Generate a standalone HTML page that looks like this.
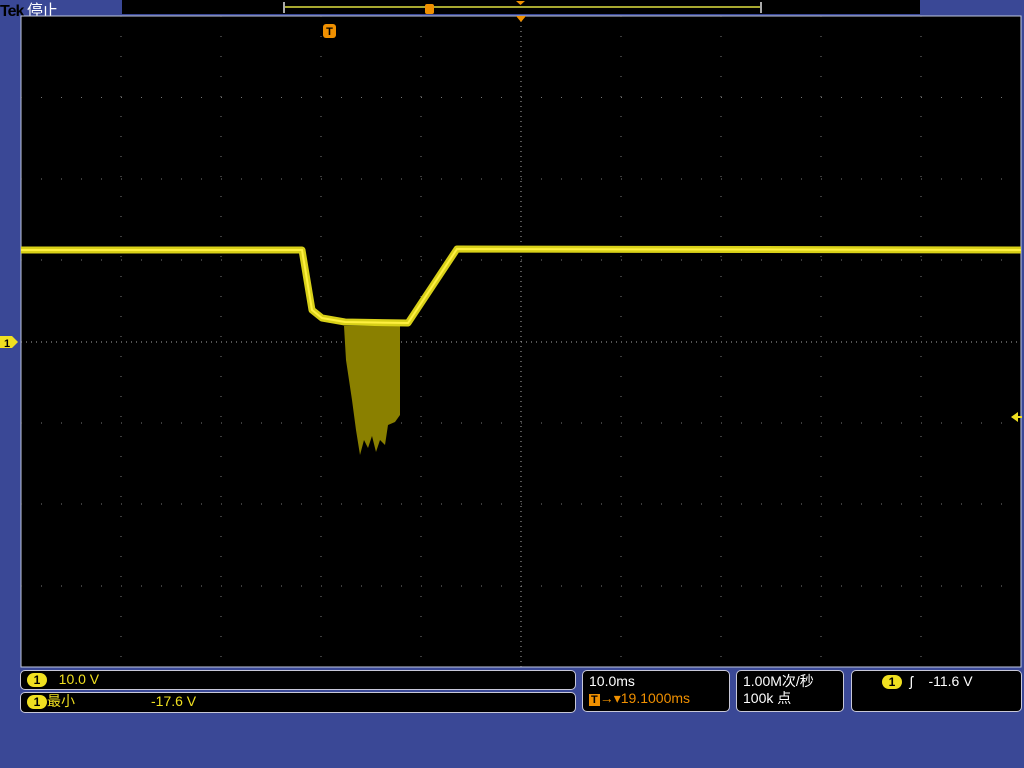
<!DOCTYPE html>
<html><head><meta charset="utf-8"><style>
body{margin:0;width:1024px;height:768px;background:#3a4896;overflow:hidden;position:relative;font-family:"Liberation Sans","Noto Sans CJK SC",sans-serif}
.box{position:absolute;background:#000;border:1px solid #c8c8d8;border-radius:5px;box-sizing:border-box;color:#f0e020;font-size:14px;line-height:17px}
.c{display:inline-block;width:20px;height:14px;border-radius:7px;background:#f0e020;color:#000;text-align:center;font-size:12px;line-height:14px;font-weight:bold;vertical-align:middle}
.w{color:#fff}
</style></head><body>
<div style="position:absolute;left:0;top:-3px;font-size:16px;color:#000;font-weight:bold;letter-spacing:-1px">Tek <span style="color:#fff;font-weight:normal">停止</span></div>
<svg width="1024" height="768" style="position:absolute;left:0;top:0">
<rect x="122" y="0" width="798" height="14" fill="#000"/>
<line x1="284" y1="7" x2="761" y2="7" stroke="#e0e040" stroke-width="1.5"/>
<path d="M284 2V13M761 2V13" stroke="#aaa" stroke-width="2"/>
<rect x="425" y="4" width="9" height="10" rx="2" fill="#f09000"/>
<path d="M516 1h9l-4.5 4z" fill="#f09000"/>
<rect x="21" y="16" width="1000" height="651" fill="#000" stroke="#c0c8e0" stroke-width="1"/>
<g stroke="#777" stroke-width="1" stroke-dasharray="1 19">
<path d="M121 16V667M221 16V667M321 16V667M421 16V667M621 16V667M721 16V667M821 16V667M921 16V667"/>
<path d="M21 97.5H1021M21 179H1021M21 260H1021M21 423H1021M21 504H1021M21 586H1021"/>
</g>
<g stroke="#aaa" stroke-width="1" stroke-dasharray="1 4">
<path d="M521 16V667M21 342H1021"/>
</g>
<path d="M516 16h10l-5 6z" fill="#f09000"/>
<rect x="323" y="24" width="13" height="14" rx="3" fill="#f09000"/>
<text x="329.5" y="35" font-size="11" font-weight="bold" text-anchor="middle" fill="#000" font-family="Liberation Sans">T</text>
<path d="M344 326 L346 360 L352 400 L356 430 L360 455 L364 440 L368 448 L372 436 L376 452 L380 440 L385 445 L388 425 L395 422 L400 415 L400 326 Z" fill="#8a8000"/>
<path d="M21 250 L302 250 L312 310 L322 318 L345 322 L408 323 L457 249 L1021 250" fill="none" stroke="#d8d018" stroke-width="7" stroke-linejoin="round"/>
<path d="M21 250 L302 250 L312 310 L322 318 L345 322 L408 323 L457 249 L1021 250" fill="none" stroke="#fff040" stroke-width="2"/>
<path d="M0 336h12l6 6-6 6H0z" fill="#f0e020"/>
<text x="4" y="347" font-size="11" font-weight="bold" fill="#000" font-family="Liberation Sans">1</text>
<path d="M1011 417l7-5v10z" fill="#f0e020"/><rect x="1018" y="416" width="4" height="2" fill="#f0e020"/>
</svg>
<div class="box" style="left:20px;top:670px;width:556px;height:20px;padding-left:6px"><span class="c">1</span>&nbsp;&nbsp; 10.0 V</div>
<div class="box" style="left:20px;top:692px;width:556px;height:21px;padding-left:6px"><span class="c">1</span>最小<span style="margin-left:76px">-17.6 V</span></div>
<div class="box" style="left:582px;top:670px;width:148px;height:42px;padding:2px 6px"><span class="w">10.0ms</span><br><span style="color:#f09000"><span style="background:#f09000;color:#000;font-size:11px;font-weight:bold;padding:0 2px">T</span>→▾19.1000ms</span></div>
<div class="box" style="left:736px;top:670px;width:108px;height:42px;padding:2px 6px" ><span class="w">1.00M次/秒<br>100k 点</span></div>
<div class="box" style="left:851px;top:670px;width:171px;height:42px;padding:2px 6px 0 30px"><span class="c">1</span>&nbsp;&nbsp;<span class="w">ʃ&nbsp;&nbsp;&nbsp; -11.6 V</span></div>
</body></html>
